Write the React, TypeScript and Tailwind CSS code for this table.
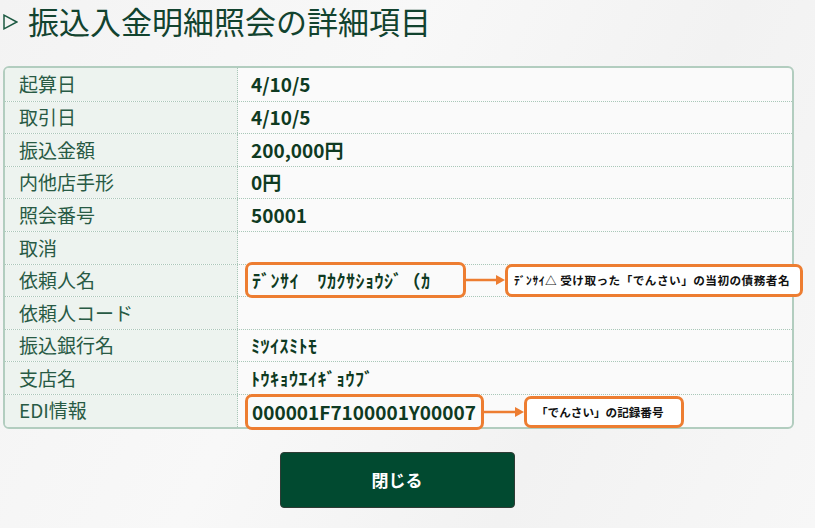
import React from "react";

type Note = { text: string; boxW: number; arrowW: number; noteW: number; noteH: number; pad: number; dy: number };

const rows: { label: string; value: string; kana?: boolean; note?: Note }[] = [
  { label: "起算日", value: "4/10/5" },
  { label: "取引日", value: "4/10/5" },
  { label: "振込金額", value: "200,000円" },
  { label: "内他店手形", value: "0円" },
  { label: "照会番号", value: "50001" },
  { label: "取消", value: "" },
  {
    label: "依頼人名",
    value: "ﾃﾞﾝｻｲ　ﾜｶｸｻｼｮｳｼﾞ（ｶ",
    kana: true,
    note: { text: "ﾃﾞﾝｻｲ△ 受け取った「でんさい」の当初の債務者名", boxW: 221, arrowW: 39, noteW: 298, noteH: 33, pad: 6, dy: 0 },
  },
  { label: "依頼人コード", value: "" },
  { label: "振込銀行名", value: "ﾐﾂｲｽﾐﾄﾓ", kana: true },
  { label: "支店名", value: "ﾄｳｷｮｳｴｲｷﾞｮｳﾌﾞ", kana: true },
  {
    label: "EDI情報",
    value: "000001F7100001Y00007",
    note: { text: "「でんさい」の記録番号", boxW: 239, arrowW: 40, noteW: 160, noteH: 32, pad: 9, dy: 3 },
  },
];

const font = { fontFamily: '"Noto Sans CJK JP", "Noto Sans", sans-serif' };

function Arrow({ width }: { width: number }) {
  return (
    <svg width={width} height="12" viewBox={`0 0 ${width} 12`} className="shrink-0">
      <line x1="0" y1="6" x2={width - 8} y2="6" stroke="#ed7d31" strokeWidth="2.5" />
      <polygon points={`${width - 9},1 ${width},6 ${width - 9},11`} fill="#ed7d31" />
    </svg>
  );
}

// value wrapped in an orange frame, with an arrow pointing to a callout
function Annotated({ value, note }: { value: string; note: Note }) {
  return (
    <div className="relative z-10 flex items-center -ml-[6px]" style={{ marginTop: note.dy }}>
      <div
        className="shrink-0 h-[36px] border-[3px] border-[#ed7d31] rounded-[7px] flex items-center pl-[4px]"
        style={{ width: note.boxW }}
      >
        {value}
      </div>
      <Arrow width={note.arrowW} />
      <div
        className="shrink-0 border-[3px] border-[#ed7d31] rounded-[7px] bg-white flex items-center text-[11.6px] font-semibold text-[#111] whitespace-nowrap"
        style={{ width: note.noteW, height: note.noteH, paddingLeft: note.pad }}
      >
        {note.text}
      </div>
    </div>
  );
}

export default function App() {
  return (
    <div
      style={font}
      className="w-[815px] h-[528px] overflow-hidden bg-[linear-gradient(115deg,#f3f3f3_0%,#f8f8f8_40%,#f2f2f2_70%,#f7f7f7_100%)]"
    >
      {/* title */}
      <div className="flex items-center pl-[3px]">
        <svg width="15" height="16" viewBox="0 0 15 16" className="mr-[10px] mt-[2px] shrink-0">
          <polygon points="1,1.2 13.8,8 1,14.8" fill="none" stroke="#1d5a42" strokeWidth="1.5" />
        </svg>
        <h1 className="text-[31px] leading-[42px] text-[#12432f] whitespace-nowrap">振込入金明細照会の詳細項目</h1>
      </div>

      {/* table */}
      <div className="mt-[24px] ml-[3px] w-[791px] border-2 border-[#b2cdbf] rounded-[6px] bg-[#fafafa]">
        {rows.map((r, i) => (
          <div
            key={r.label}
            className={`flex h-[32.6px] ${i > 0 ? "border-t border-dotted border-[#a9c7b8]" : ""}`}
          >
            <div
              className={`w-[233px] shrink-0 flex items-center pl-[14px] bg-[#edf3ef] border-r border-dotted border-[#a9c7b8] text-[19px] text-[#285a44] ${
                i === 0 ? "rounded-tl-[4px]" : ""
              } ${i === rows.length - 1 ? "rounded-bl-[4px]" : ""}`}
            >
              {r.label}
            </div>
            <div
              className={`flex items-center pl-[13px] font-bold text-[#0f3a22] ${
                r.kana ? "text-[18px] tracking-[0.5px]" : "text-[19px]"
              }`}
            >
              {r.note ? <Annotated value={r.value} note={r.note} /> : r.value}
            </div>
          </div>
        ))}
      </div>

      {/* close button */}
      <div className="flex justify-center mt-[23px] pr-[21px]">
        <button className="w-[235px] h-[56px] bg-[#014a30] border border-[#2e3b34] rounded-[4px] text-white text-[17px] font-bold">
          閉じる
        </button>
      </div>
    </div>
  );
}
